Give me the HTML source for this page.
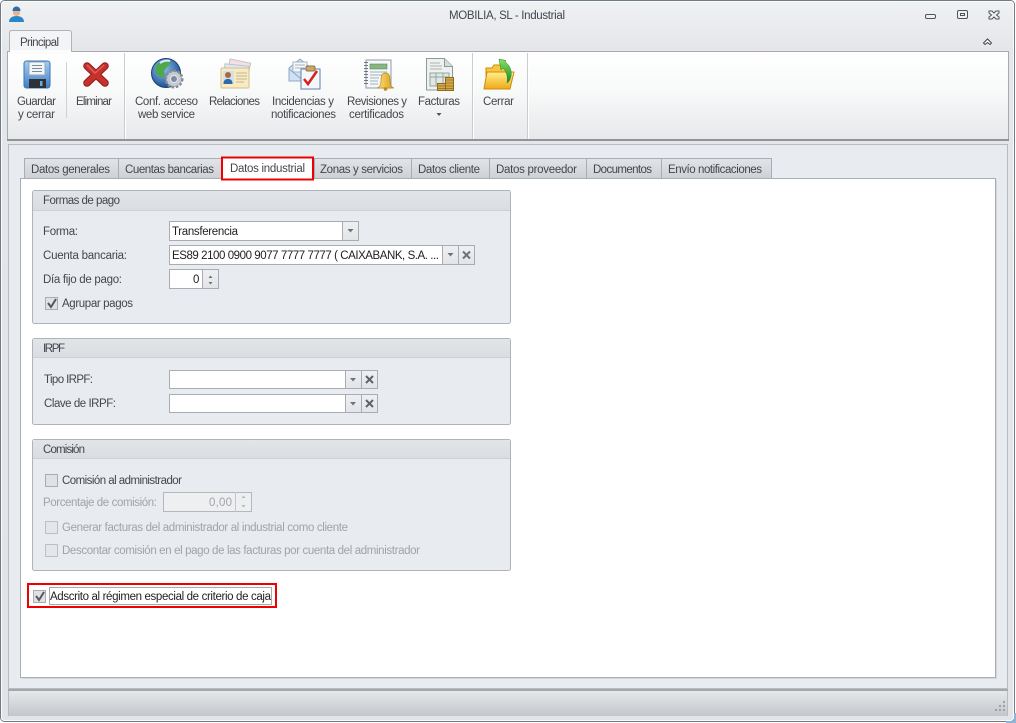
<!DOCTYPE html>
<html lang="es"><head><meta charset="utf-8"><title>MOBILIA, SL - Industrial</title>
<style>
html,body{margin:0;padding:0;background:#fff;width:1016px;height:723px;overflow:hidden}
svg{display:block}
text{font-family:"Liberation Sans",sans-serif;font-size:11.5px;fill:#43474c;white-space:pre}
.d{fill:#a0a3a7}
.b{fill:#1f1f1f}
</style></head><body>
<svg width="1016" height="723" viewBox="0 0 1016 723" xmlns="http://www.w3.org/2000/svg">
<defs>
<linearGradient id="win" x1="0" y1="0" x2="0" y2="1"><stop offset="0" stop-color="#f0f1f3"/><stop offset="0.07" stop-color="#e4e6e9"/><stop offset="1" stop-color="#e2e4e7"/></linearGradient>
<linearGradient id="rib" x1="0" y1="0" x2="0" y2="1"><stop offset="0" stop-color="#ffffff"/><stop offset="0.45" stop-color="#f8f9f9"/><stop offset="1" stop-color="#e6e8ea"/></linearGradient>
<linearGradient id="tab" x1="0" y1="0" x2="0" y2="1"><stop offset="0" stop-color="#e2e4e8"/><stop offset="1" stop-color="#ccd0d5"/></linearGradient>
<linearGradient id="hdr" x1="0" y1="0" x2="0" y2="1"><stop offset="0" stop-color="#e2e5e8"/><stop offset="1" stop-color="#dadde1"/></linearGradient>
<linearGradient id="st" x1="0" y1="0" x2="0" y2="1"><stop offset="0" stop-color="#e6e8ea"/><stop offset="1" stop-color="#c3c7cb"/></linearGradient>
<linearGradient id="btn" x1="0" y1="0" x2="0" y2="1"><stop offset="0" stop-color="#eef0f2"/><stop offset="1" stop-color="#e2e4e8"/></linearGradient>
<linearGradient id="disk" x1="0" y1="0" x2="0" y2="1"><stop offset="0" stop-color="#a8cdf0"/><stop offset="1" stop-color="#3f7fc4"/></linearGradient>
<radialGradient id="globe" cx="0.4" cy="0.35" r="0.7"><stop offset="0" stop-color="#8fc4f0"/><stop offset="1" stop-color="#14468e"/></radialGradient>
<linearGradient id="fold" x1="0" y1="0" x2="0" y2="1"><stop offset="0" stop-color="#fff08a"/><stop offset="1" stop-color="#f0a818"/></linearGradient>
<linearGradient id="bell" x1="0" y1="0" x2="1" y2="0"><stop offset="0" stop-color="#ffe27a"/><stop offset="1" stop-color="#d89a18"/></linearGradient>
<linearGradient id="arr" x1="0" y1="0" x2="0" y2="1"><stop offset="0" stop-color="#8fe05a"/><stop offset="1" stop-color="#128a2a"/></linearGradient>
</defs>

<!-- window -->
<rect x="0" y="0" width="1016" height="723" fill="#ffffff"/>
<rect x="0.5" y="0.5" width="1014" height="721" rx="4" fill="url(#win)" stroke="#6f7c88"/>
<rect x="1.5" y="1.5" width="1012" height="719" rx="3" fill="none" stroke="#fafbfb"/>
<path d="M1015 713v9h-9" fill="none" stroke="#8fb4d8" stroke-width="2"/>

<!-- app icon -->
<g>
<path d="M9 22c0-4 3-6 7.500-6s7.500 2 7.500 6z" fill="#2a86c8"/>
<circle cx="16.500" cy="12.500" r="3.600" fill="#e9b48c"/>
<path d="M12.500 11c0-3 2-4.500 4-4.500s4 1.500 4 4.500z" fill="#2b6fa8"/>
</g>
<text x="449" y="19" textLength="116">MOBILIA, SL - Industrial</text>

<!-- window buttons -->
<rect x="925.500" y="14.500" width="10" height="4" rx="1.500" fill="#eef0f1" stroke="#4f5358"/>
<rect x="957.500" y="10.500" width="10" height="8" rx="1.500" fill="#eef0f1" stroke="#4f5358"/>
<rect x="960.500" y="13.500" width="4" height="2" fill="none" stroke="#4f5358"/>
<path d="M989 11h3l2 2 2-2h3v2l-2.500 2 2.500 2v2h-3l-2-2-2 2h-3v-2l2.500-2-2.500-2z" fill="#eef0f1" stroke="#4f5358"/>
<path d="M983.500 43l4-4 4 4-1.500 1.500-2.500-2-2.500 2z" fill="#fff" stroke="#3f4347"/>

<!-- ribbon -->
<rect x="7.500" y="51.500" width="1001" height="89" fill="url(#rib)" stroke="#a6aaae"/>
<rect x="7" y="139" width="1002" height="2" fill="#8f9499"/>
<path d="M9.500 52V33q0-2.500 2.500-2.500h57q2.500 0 2.500 2.500v19" fill="#f2f4f6" stroke="#b0b4b8"/>
<rect x="10" y="50" width="61" height="4" fill="#fbfcfc"/>
<text x="20" y="46" textLength="39">Principal</text>

<path d="M124.500 53v86M472.500 53v86M527.500 53v86" stroke="#c9ccd0"/>
<path d="M125.500 53v86M473.500 53v86M528.500 53v86" stroke="#ffffff"/>
<path d="M66.500 62v56" stroke="#cfd2d5"/>

<!-- save icon -->
<rect x="24" y="61" width="26" height="27" rx="2.500" fill="url(#disk)" stroke="#3b74b4"/>
<rect x="29" y="62" width="16" height="13" fill="#f2f5f8" stroke="#8fa8c2"/>
<path d="M32 65.500h10M32 68.500h10M32 71.500h10" stroke="#7f8a95"/>
<rect x="29" y="79" width="17" height="9" fill="#2e3238"/>
<rect x="40" y="81" width="2.500" height="5" fill="#6fa8dc"/>

<!-- delete icon -->
<path d="M87 66l18 17M105 66L87 83" stroke="#8e1a18" stroke-width="7.500" stroke-linecap="round"/>
<path d="M87 66l18 17M105 66L87 83" stroke="#c8302c" stroke-width="5.500" stroke-linecap="round"/>
<path d="M87 65l8 8 9-8" fill="none" stroke="#e8716c" stroke-width="1.500" opacity=".7"/>

<!-- globe with gear -->
<circle cx="166" cy="73" r="14.500" fill="url(#globe)" stroke="#1d3f72"/>
<path d="M156 66c3-4 8-6 12-5l3 3-4 3-3 4 1 4-3 3-4-3-3-4zM172 76l4-2 3 1-2 6-4 3-2-4z" fill="#4fa94a"/>
<path d="M160 63c3-2 6-3 10-2" stroke="#d6ecfa" stroke-width="2" fill="none"/>
<circle cx="174" cy="79" r="8" fill="#b6bcc4" stroke="#868d96" stroke-width="3" stroke-dasharray="2.500 1.600"/>
<circle cx="174" cy="79" r="7" fill="#c6cbd2"/>
<circle cx="174" cy="79" r="3.500" fill="#7d8aa0" stroke="#e6e9ee"/>

<!-- relaciones icon -->
<rect x="228" y="61" width="21" height="18" fill="#f3dfe6" stroke="#c8c2c4" transform="rotate(12 239 70)"/>
<rect x="224" y="65" width="24" height="19" fill="#dfe8f0" stroke="#bbc4cc" transform="rotate(6 236 74)"/>
<rect x="221" y="68" width="28" height="20" rx="1" fill="#f8ebc4" stroke="#cfc08e"/>
<rect x="223" y="71" width="11" height="13" fill="#d4dfe9"/>
<circle cx="228" cy="75" r="3" fill="#a86c3c"/>
<path d="M223.500 84c0-4 2-5 4.500-5s4.500 1 4.500 5z" fill="#2e6aa6"/>
<path d="M236 73h11M236 76h11M236 79h11M236 82h8" stroke="#c4b68c"/>

<!-- incidencias icon -->
<path d="M289 68l11-9 11 9v13h-22z" fill="#cfe2f4" stroke="#8ea9c4"/>
<rect x="293" y="62" width="14" height="10" fill="#f5f7f9" stroke="#a8b4c0"/>
<path d="M295 65h10M295 68h10" stroke="#a8b4c0"/>
<path d="M289 69l11 9 6-4" fill="none" stroke="#8ea9c4"/>
<rect x="301" y="69" width="19" height="20" fill="#f4f8fc" stroke="#5a83b0"/>
<rect x="306" y="66" width="9" height="5" rx="1.500" fill="#c9a868" stroke="#8a7448"/>
<path d="M304 79l4 5 9-13" fill="none" stroke="#d8201c" stroke-width="2.500"/>

<!-- revisiones icon -->
<rect x="366" y="60" width="25" height="28" fill="#f5f7f9" stroke="#8f9aa4"/>
<path d="M364 62.500h4M364 65.500h4M364 68.500h4M364 71.500h4M364 74.500h4M364 77.500h4M364 80.500h4M364 83.500h4" stroke="#6f7780"/>
<rect x="370" y="64" width="17" height="5" fill="#86b582" stroke="#5a8a58" stroke-width=".6"/>
<path d="M370 72h17M370 75h12M370 78h9M370 81h8M370 84h8" stroke="#9fb2c2"/>
<path d="M377 88c3-1 4-3 4-8s1.500-7 4.500-7 4.500 2 4.500 7 1 7 4 8z" fill="url(#bell)" stroke="#b88a20" stroke-width=".7"/>
<circle cx="385.500" cy="89" r="1.800" fill="#b88a20"/>

<!-- facturas icon -->
<path d="M426.500 58.500h18l8 8v23.500h-26z" fill="#eef1ef" stroke="#8b9c98"/>
<path d="M444.500 58.500v8h8" fill="#d5dcd9" stroke="#8b9c98"/>
<path d="M430 63h10M430 66h12M430 69h12" stroke="#a8b2b0"/>
<rect x="430" y="73" width="19" height="13" fill="#e0e8e4" stroke="#95a5a0"/>
<path d="M430 77h19M436 73v13M443 73v13" stroke="#95a5a0"/>
<rect x="445.500" y="77.500" width="8" height="13" fill="#d8a848" stroke="#8a6c20"/>
<rect x="437.500" y="83.500" width="8" height="7" fill="#d8a848" stroke="#8a6c20"/>
<path d="M446 80h7M446 83h7M446 86h7M446 88.500h7M438 86h7M438 88.500h7" stroke="#8a6c20" stroke-width=".7"/>

<!-- cerrar icon -->
<path d="M486 89V68h6l2-3h12l2 3v21z" fill="#f6c840" stroke="#d08a10"/>
<path d="M484 89l3-17h27l-4 17z" fill="url(#fold)" stroke="#d08a10"/>
<path d="M499 59l7 1.500-1 1.500c5 3 7 9 6 14-.5 3-2 6-4 7 1-5 0-11-4-15l-2 2z" fill="url(#arr)" stroke="#1a8a30" stroke-width=".5"/>

<!-- ribbon labels -->
<text x="17" y="105" textLength="39">Guardar</text>
<text x="18" y="118" textLength="37">y cerrar</text>
<text x="76" y="105" textLength="36">Eliminar</text>
<text x="135" y="105" textLength="63">Conf. acceso</text>
<text x="138" y="118" textLength="57">web service</text>
<text x="209" y="105" textLength="51">Relaciones</text>
<text x="272" y="105" textLength="62">Incidencias y</text>
<text x="271" y="118" textLength="65">notificaciones</text>
<text x="347" y="105" textLength="60">Revisiones y</text>
<text x="349" y="118" textLength="55">certificados</text>
<text x="418" y="105" textLength="42">Facturas</text>
<path d="M436.500 113h5l-2.500 3z" fill="#555"/>
<text x="483" y="105" textLength="31">Cerrar</text>

<!-- panel -->
<rect x="8.500" y="144.500" width="999" height="544" fill="#e8ebef" stroke="#b8bcc1"/>
<rect x="8" y="689" width="1000" height="2" fill="#a4a8ad"/>
<rect x="8" y="691" width="1000" height="25" fill="url(#st)"/>
<path d="M1007.500 691v25" stroke="#b8bcc0"/><path d="M8.500 691v25" stroke="#b8bcc0"/>
<g fill="#9da1a6"><rect x="1003" y="701" width="2" height="2"/><rect x="999" y="705" width="2" height="2"/><rect x="1003" y="705" width="2" height="2"/><rect x="995" y="709" width="2" height="2"/><rect x="999" y="709" width="2" height="2"/><rect x="1003" y="709" width="2" height="2"/></g>

<!-- tabs -->
<g fill="url(#tab)" stroke="#a9adb5">
<rect x="24.500" y="158.500" width="94" height="21"/>
<rect x="118.500" y="158.500" width="103" height="21"/>
<rect x="314.500" y="158.500" width="97" height="21"/>
<rect x="411.500" y="158.500" width="78" height="21"/>
<rect x="489.500" y="158.500" width="97" height="21"/>
<rect x="586.500" y="158.500" width="75" height="21"/>
<rect x="661.500" y="158.500" width="110" height="21"/>
</g>
<rect x="20.500" y="178.500" width="975" height="499" fill="#ffffff" stroke="#a9adb5"/>
<path d="M996.500 180v499M22 678.500h975" stroke="#d3d6da"/>
<rect x="222" y="157" width="91" height="23" fill="#ffffff"/>
<rect x="222" y="157.500" width="91" height="22" fill="none" stroke="#ee0000" stroke-width="2"/>
<text x="31" y="173" textLength="79">Datos generales</text>
<text x="125" y="173" textLength="89">Cuentas bancarias</text>
<text x="230" y="172" textLength="75">Datos industrial</text>
<text x="320" y="173" textLength="83">Zonas y servicios</text>
<text x="418" y="173" textLength="62">Datos cliente</text>
<text x="496" y="173" textLength="81">Datos proveedor</text>
<text x="593" y="173" textLength="59">Documentos</text>
<text x="668" y="173" textLength="94">Envío notificaciones</text>

<!-- group 1 -->
<rect x="32.500" y="190.500" width="478" height="133" rx="2" fill="#e8ebef" stroke="#b0b4ba"/>
<rect x="33" y="191" width="477" height="19" fill="url(#hdr)"/>
<path d="M33 210.500h477" stroke="#cdd0d4"/>
<text x="43" y="204" textLength="77">Formas de pago</text>
<text x="43" y="235" textLength="35">Forma:</text>
<text x="43" y="259" textLength="84">Cuenta bancaria:</text>
<text x="43" y="283" textLength="79">Día fijo de pago:</text>

<rect x="169.500" y="221.500" width="189" height="19" fill="#fff" stroke="#a9adb3"/>
<rect x="342.500" y="221.500" width="16" height="19" fill="url(#btn)" stroke="#a9adb3"/>
<path d="M347.500 229h6l-3 3.500z" fill="#6e7378"/>
<text x="172" y="235" textLength="66" class="b">Transferencia</text>

<rect x="169.500" y="245.500" width="305" height="19" fill="#fff" stroke="#a9adb3"/>
<rect x="442.500" y="245.500" width="16" height="19" fill="url(#btn)" stroke="#a9adb3"/>
<rect x="458.500" y="245.500" width="16" height="19" fill="url(#btn)" stroke="#a9adb3"/>
<path d="M447.500 253h6l-3 3.500z" fill="#6e7378"/>
<path d="M463 251.500l7 7M470 251.500l-7 7" stroke="#6e7378" stroke-width="2"/>
<text x="172" y="259" textLength="267" class="b">ES89 2100 0900 9077 7777 7777 ( CAIXABANK, S.A. ...</text>

<rect x="169.500" y="269.500" width="49" height="19" fill="#fff" stroke="#a9adb3"/>
<rect x="202.500" y="269.500" width="16" height="19" fill="url(#btn)" stroke="#a9adb3"/>
<path d="M210.500 275.500l2 2.500h-4zM210.500 284.500l2-2.500h-4z" fill="#6e7378"/>
<text x="193" y="283" textLength="7" class="b">0</text>

<rect x="45.500" y="297.500" width="12" height="12" fill="#dfe1e4" stroke="#a9adb3"/>
<path d="M48 303l3 4 5-8" fill="none" stroke="#55585c" stroke-width="2"/>
<text x="62" y="307" textLength="71">Agrupar pagos</text>

<!-- group 2 -->
<rect x="32.500" y="338.500" width="478" height="86" rx="2" fill="#e8ebef" stroke="#b0b4ba"/>
<rect x="33" y="339" width="477" height="18" fill="url(#hdr)"/>
<path d="M33 357.500h477" stroke="#cdd0d4"/>
<text x="43" y="352" textLength="22">IRPF</text>
<text x="44" y="383" textLength="49">Tipo IRPF:</text>
<text x="44" y="407" textLength="72">Clave de IRPF:</text>

<rect x="169.500" y="370.500" width="208" height="18" fill="#fff" stroke="#a9adb3"/>
<rect x="345.500" y="370.500" width="16" height="18" fill="url(#btn)" stroke="#a9adb3"/>
<rect x="361.500" y="370.500" width="16" height="18" fill="url(#btn)" stroke="#a9adb3"/>
<path d="M350 378h6l-3 3.500z" fill="#6e7378"/>
<path d="M366 376l7 7M373 376l-7 7" stroke="#5e6368" stroke-width="2"/>

<rect x="169.500" y="394.500" width="208" height="18" fill="#fff" stroke="#a9adb3"/>
<rect x="345.500" y="394.500" width="16" height="18" fill="url(#btn)" stroke="#a9adb3"/>
<rect x="361.500" y="394.500" width="16" height="18" fill="url(#btn)" stroke="#a9adb3"/>
<path d="M350 402h6l-3 3.500z" fill="#6e7378"/>
<path d="M366 400l7 7M373 400l-7 7" stroke="#5e6368" stroke-width="2"/>

<!-- group 3 -->
<rect x="32.500" y="439.500" width="478" height="131" rx="2" fill="#e8ebef" stroke="#b0b4ba"/>
<rect x="33" y="440" width="477" height="18" fill="url(#hdr)"/>
<path d="M33 458.500h477" stroke="#cdd0d4"/>
<text x="43" y="453" textLength="42">Comisión</text>

<rect x="45.500" y="474.500" width="12" height="12" fill="#dfe1e4" stroke="#a9adb3"/>
<text x="62" y="484" textLength="120">Comisión al administrador</text>
<text x="43" y="506" textLength="114" class="d">Porcentaje de comisión:</text>
<rect x="163.500" y="492.500" width="88" height="19" fill="#eeeff1" stroke="#b4b7bb"/>
<path d="M235.500 492v20" stroke="#c4c7cb"/>
<path d="M243.500 495.500l2 2.500h-4zM243.500 507.500l2-2.500h-4z" fill="#b4b7bb"/>
<text x="209" y="506" textLength="23" class="d">0,00</text>

<rect x="45.500" y="521.500" width="12" height="12" fill="#e4e6e9" stroke="#bcc0c4"/>
<text x="62" y="531" textLength="286" class="d">Generar facturas del administrador al industrial como cliente</text>
<rect x="45.500" y="544.500" width="12" height="12" fill="#e4e6e9" stroke="#bcc0c4"/>
<text x="62" y="554" textLength="358" class="d">Descontar comisión en el pago de las facturas por cuenta del administrador</text>

<!-- highlighted checkbox -->
<rect x="28" y="584" width="248" height="23" fill="none" stroke="#ee0000" stroke-width="2"/>
<rect x="33.500" y="590.500" width="12" height="12" fill="#dfe1e4" stroke="#a9adb3"/>
<path d="M36 596l3 4 5-8" fill="none" stroke="#55585c" stroke-width="2"/>
<rect x="49.500" y="587.500" width="222" height="17" fill="none" stroke="#555" stroke-dasharray="1 1"/>
<text x="50" y="600" textLength="221" class="b">Adscrito al régimen especial de criterio de caja</text>
</svg>
</body></html>
